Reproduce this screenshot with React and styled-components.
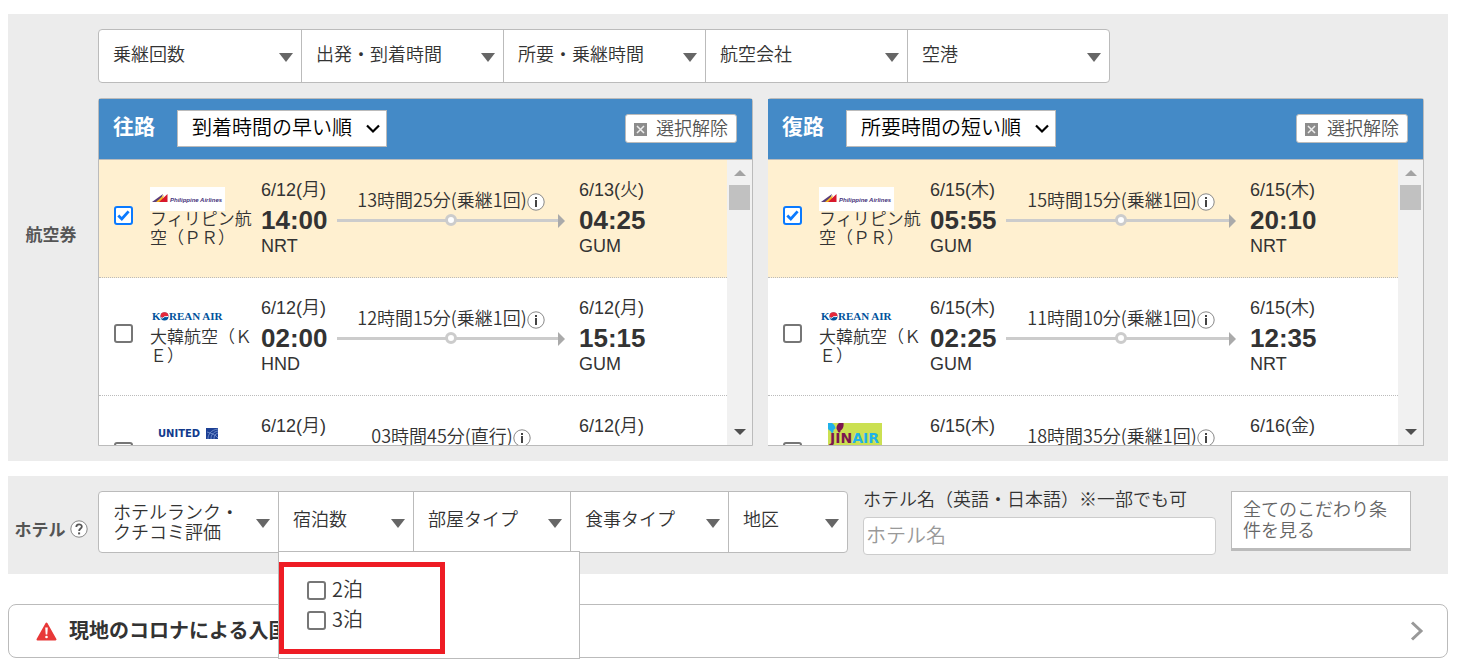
import React, { useState } from "react";
import styled, { createGlobalStyle } from "styled-components";

const LINE = "#bbbbbb";
const latinFirst = '"Liberation Sans", "Noto Sans CJK JP", sans-serif';

const GlobalStyle = createGlobalStyle`
  *, *::before, *::after { box-sizing: border-box; }
  body {
    margin: 0;
    background: #fff;
    color: #333;
    font-family: "Noto Sans CJK JP", sans-serif;
    font-size: 18px;
    font-weight: 350;
    line-height: 20px;
  }
  button, input, select { font: inherit; color: inherit; }
`;

const Page = styled.main`
  padding: 14px 10px 6px 8px;
`;

const Section = styled.section`
  display: grid;
  grid-template-columns: 90px minmax(0, 1fr);
  align-items: center;
  padding: 15px 24px 15px 0;
  margin-bottom: 15px;
  background: #ececec;
`;

const HotelSection = styled(Section)`
  padding-bottom: 21px;
`;

const SectionTitle = styled.h2`
  display: flex;
  align-items: center;
  justify-content: center;
  gap: 4px;
  margin: 0;
  padding: 0 4px 8px 0;
  font-size: 17px;
  font-weight: 700;
  color: #555;
  white-space: nowrap;
`;

const HotelTitle = styled(SectionTitle)`
  padding: 14px 4px 0 0;
`;

const FilterBar = styled.div`
  display: grid;
  grid-template-columns: ${(p) => p.$columns};
  width: 100%;
  max-width: ${(p) => p.$max}px;
  background: #fff;
  border: 1px solid ${LINE};
  border-radius: 4px;
`;

const FilterCell = styled.div`
  position: relative;
  display: flex;
  & + & { border-left: 1px solid ${LINE}; }
`;

const FilterButton = styled.button`
  display: flex;
  flex: 1;
  align-items: center;
  justify-content: space-between;
  min-height: ${(p) => (p.$tall ? 60 : 52)}px;
  padding: 0 8px 0 14px;
  border: 0;
  background: none;
  text-align: left;
  white-space: pre-line;
  cursor: pointer;
`;

const FilterText = styled.span`
  padding-bottom: ${(p) => p.$raise}px;
`;

const CaretSvg = styled.svg`
  flex: none;
  margin-top: 3px;
`;

const Menu = styled.fieldset`
  position: absolute;
  z-index: 2;
  top: 59px;
  left: -1px;
  width: 302px;
  min-width: 0;
  height: 108px;
  margin: 0;
  padding: 10px 0 0;
  border: 1px solid ${LINE};
  background: #fff;
`;

const Highlight = styled.div`
  display: flex;
  flex-direction: column;
  width: 166px;
  height: 92px;
  padding: 7px 0 0 23px;
  border: 5px solid #ee1c24;
`;

const CheckWrap = styled.span`
  position: relative;
  display: block;
  flex: none;
  width: 19px;
  height: 19px;
  svg { position: absolute; inset: 0; pointer-events: none; }
`;

const Option = styled.label`
  display: flex;
  align-items: center;
  gap: 6px;
  height: 30px;
  font-size: 20px;
  cursor: pointer;
  ${CheckWrap} { margin-top: 3px; }
`;

const CheckInput = styled.input`
  appearance: none;
  display: block;
  width: 19px;
  height: 19px;
  margin: 0;
  background: #fff;
  border: 2px solid #767676;
  border-radius: 3px;
  &:checked { border-color: #0a7aff; }
`;

const Panels = styled.div`
  display: grid;
  grid-template-columns: minmax(0, 655fr) minmax(0, 656fr);
  gap: 15px;
  margin-top: 15px;
`;

const Panel = styled.section`
  border: 1px solid ${LINE};
  border-left-width: ${(p) => (p.$plain ? 0 : 1)}px;
  border-radius: 3px 3px 0 0;
  background: #fff;
`;

const PanelHead = styled.header`
  display: flex;
  align-items: center;
  height: 61px;
  padding: 0 15px 2px 14px;
  background: #448ac7;
  border-bottom: 1px solid ${LINE};
`;

const PanelTitle = styled.h3`
  margin: 0 22px 6px 0;
  font-size: 21px;
  font-weight: 700;
  color: #fff;
`;

const SelectWrap = styled.span`
  position: relative;
  display: block;
  width: 210px;
  svg { position: absolute; right: 7px; top: 14px; pointer-events: none; }
`;

const SortSelect = styled.select`
  appearance: none;
  display: block;
  width: 100%;
  height: 37px;
  padding: 0 28px 3px 14px;
  border: 1px solid ${LINE};
  border-radius: 0;
  background: #fff;
  color: #000;
  font-size: 20px;
`;

const ClearButton = styled.button`
  display: flex;
  align-items: center;
  gap: 9px;
  height: 29px;
  margin-left: auto;
  padding: 0 8px;
  border: 1px solid ${LINE};
  border-radius: 3px;
  background: #fff;
  color: #555;
  white-space: nowrap;
  cursor: pointer;
  svg { margin-top: 2px; }
  span { padding-bottom: 3px; }
`;

const PanelBody = styled.div`
  display: flex;
  height: 285px;
`;

const Flights = styled.ul`
  flex: 1;
  min-width: 0;
  margin: 0;
  padding: 0;
  list-style: none;
  overflow-y: auto;
  scrollbar-width: none;
`;

const Flight = styled.li`
  display: grid;
  grid-template-columns: 36px 111px 76px minmax(0, 1fr) 148px;
  height: 118px;
  padding-left: 15px;
  border-bottom: 1px dotted ${LINE};
  background: ${(p) => (p.$selected ? "#fff0d0" : "#fff")};
`;

const PickCell = styled.div`
  padding-top: 46px;
`;

const Airline = styled.div`
  padding-top: 27px;
  width: 105px;
  font-size: 17px;
  line-height: 19px;
  svg { display: block; margin-bottom: -3px; }
`;

const Stop = styled.div`
  padding-top: 17px;
  font-family: ${latinFirst};
`;

const StopDate = styled.div`
  height: 28px;
  line-height: 26px;
`;

const StopTime = styled.div`
  font-size: 26px;
  font-weight: 700;
  line-height: 30px;
`;

const StopPort = styled.div`
  line-height: 22px;
`;

const Journey = styled.div`
  padding: 27px 14px 0 0;
`;

const Duration = styled.div`
  display: flex;
  align-items: center;
  justify-content: center;
  height: 26px;
  white-space: nowrap;
  span { padding-bottom: 3px; }
  svg { margin-top: 4px; }
`;

const Track = styled.div`
  position: relative;
  display: flex;
  align-items: center;
  height: 15px;
`;

const TrackLine = styled.span`
  flex: 1;
  height: 3px;
  background: #ccc;
`;

const TrackDot = styled.span`
  position: absolute;
  left: 50%;
  top: 1px;
  width: 12px;
  height: 12px;
  margin-left: -6px;
  border: 3px solid #ccc;
  border-radius: 50%;
  background: #fff;
`;

const ScrollBar = styled.div`
  display: flex;
  flex-direction: column;
  align-items: center;
  flex: none;
  width: 25px;
  padding: 10px 0;
  background: #f1f1f1;
`;

const Thumb = styled.span`
  width: 21px;
  height: 25px;
  margin: 9px 0 auto;
  background: #c1c1c1;
`;

const HotelRow = styled.div`
  display: grid;
  grid-template-columns: minmax(0, 750px) minmax(0, 353px) 180px;
  gap: 15px;
  align-items: start;
`;

const NameField = styled.div`
  display: flex;
  flex-direction: column;
  label { line-height: 14px; padding-bottom: 12px; white-space: nowrap; }
`;

const NameInput = styled.input`
  flex: none;
  width: 100%;
  height: 38px;
  margin-bottom: -4px;
  padding: 0 4px 4px 2px;
  border: 1px solid #ccc;
  border-radius: 4px;
  background: #fff;
  font-size: 20px;
  &::placeholder { color: #999; opacity: 1; }
`;

const AllButton = styled.button`
  height: 60px;
  padding: 0 22px 2px 11px;
  border: 1px solid ${LINE};
  border-bottom-width: 3px;
  background: #fff;
  color: #666;
  line-height: 21px;
  text-align: left;
  cursor: pointer;
`;

const Notice = styled.a`
  display: flex;
  align-items: center;
  height: 54px;
  margin-top: 30px;
  padding: 0 23px 0 27px;
  border: 1px solid ${LINE};
  border-radius: 8px;
  background: #fff;
  color: #333;
  font-size: 20px;
  font-weight: 700;
  text-decoration: none;
`;

const NoticeText = styled.span`
  flex: 1;
  padding: 0 0 2px 12px;
`;

const Caret = () => (
  <CaretSvg width="14" height="9" viewBox="0 0 14 9" aria-hidden="true">
    <path d="M0 0H14L7 9Z" fill="#666" />
  </CaretSvg>
);

function Check({ checked = false, ...rest }) {
  const [on, setOn] = useState(checked);
  return (
    <CheckWrap>
      <CheckInput type="checkbox" checked={on} onChange={() => setOn(!on)} {...rest} />
      {on && (
        <svg width="19" height="19" viewBox="0 0 19 19" aria-hidden="true">
          <path d="M4.3 9.6L7.8 13L14.6 5.4" fill="none" stroke="#0a7aff" strokeWidth="2.8" />
        </svg>
      )}
    </CheckWrap>
  );
}

const CircleMark = ({ children }) => (
  <svg width="18" height="18" viewBox="0 0 18 18" aria-hidden="true">
    <circle cx="9" cy="9" r="8.2" fill="#fff" stroke="#888" strokeWidth="1" />
    {children}
  </svg>
);

const InfoMark = () => (
  <CircleMark>
    <rect x="8" y="4" width="2" height="2" fill="#444" />
    <rect x="8" y="7" width="2" height="7" fill="#444" />
  </CircleMark>
);

const HelpMark = () => (
  <CircleMark>
    <path d="M6.3 7C6.3 3.4 11.8 3.5 11.8 6.7C11.8 8.6 9.1 8.6 9.1 11" fill="none" stroke="#555" strokeWidth="1.8" />
    <rect x="8.1" y="12.4" width="2" height="2" fill="#555" />
  </CircleMark>
);

const PhilippineLogo = () => (
  <svg width="75" height="24" viewBox="0 0 75 24" role="img" aria-label="Philippine Airlines">
    <rect width="75" height="24" fill="#fff" />
    <path d="M2 15L13 7L10 15Z" fill="#5a3c78" />
    <path d="M6 15L14 8L12 15Z" fill="#f4b51e" />
    <path d="M9 15L17.5 7V15Z" fill="#d8182c" />
    <text x="20" y="15" fill="#43317a" fontFamily="Liberation Sans" fontSize="6" fontWeight="700" fontStyle="italic">
      Philippine Airlines
    </text>
  </svg>
);

const KoreanLogo = () => (
  <svg width="75" height="24" viewBox="0 0 75 24" role="img" aria-label="Korean Air">
    <g fill="#00529c" fontFamily="Liberation Serif" fontSize="11" fontWeight="700">
      <text x="2" y="15">K</text>
      <text x="19" y="15">REAN AIR</text>
    </g>
    <circle cx="14.5" cy="11.5" r="4" fill="#00529c" />
    <path d="M10.5 11.5A4 4 0 0 1 18.5 11.2C17 13.6 15 10 13.5 12C12.5 13.2 11 13 10.5 11.5Z" fill="#e6283a" />
    <path d="M10.8 12.2C12 13.8 13 13.2 14 12C15 10.8 16.5 12.5 18.4 11.2" fill="none" stroke="#fff" strokeWidth="1" />
  </svg>
);

const UnitedLogo = () => (
  <svg width="75" height="24" viewBox="0 0 75 24" role="img" aria-label="United">
    <text x="8" y="14" fill="#123a8c" fontFamily="DejaVu Sans" fontSize="10" fontWeight="700">
      UNITED
    </text>
    <rect x="56" y="5" width="12" height="11" fill="#1c3f94" />
    <path d="M58 16C58 11 61 7 68 6M61 16C61 12 63 9 68 8M64 16C64 13 65 11 68 10M57 9C61 10 66 12 68 15" fill="none" stroke="#8ba5d8" strokeWidth="0.7" />
  </svg>
);

const JinLogo = () => (
  <svg width="75" height="32" viewBox="0 0 75 32" role="img" aria-label="Jin Air">
    <rect x="9" width="54" height="32" fill="#cbe052" />
    <path d="M9 0H13C15 1 16 3 16.500 5C16.500 6 15 6 14.500 7C15 9.500 13 11 12 9C12 7.500 9.500 7.500 9 5.500Z" fill="#1fb1ea" />
    <path d="M24.500 0H20C18.500 1 17.500 3 17.500 5C17.500 6 18 6.500 18.500 7.500C19 10.500 22 10 21.500 7.500C24 6.500 25 3 24.500 0Z" fill="#7d1650" />
    <text x="11" y="20" fontFamily="DejaVu Sans" fontSize="14" fontWeight="700" fill="#7d1650">
      JIN<tspan fill="#1fb1ea">AIR</tspan>
    </text>
  </svg>
);

const LOGOS = { PR: PhilippineLogo, KE: KoreanLogo, UA: UnitedLogo, LJ: JinLogo };

const outbound = [
  { code: "PR", name: "フィリピン航空（ＰＲ）", length: "13時間25分(乗継1回)", stops: 1, checked: true, from: ["6/12(月)", "14:00", "NRT"], to: ["6/13(火)", "04:25", "GUM"] },
  { code: "KE", name: "大韓航空（ＫＥ）", length: "12時間15分(乗継1回)", stops: 1, from: ["6/12(月)", "02:00", "HND"], to: ["6/12(月)", "15:15", "GUM"] },
  { code: "UA", name: "", length: "03時間45分(直行)", stops: 0, from: ["6/12(月)", "", ""], to: ["6/12(月)", "", ""] },
];

const inbound = [
  { code: "PR", name: "フィリピン航空（ＰＲ）", length: "15時間15分(乗継1回)", stops: 1, checked: true, from: ["6/15(木)", "05:55", "GUM"], to: ["6/15(木)", "20:10", "NRT"] },
  { code: "KE", name: "大韓航空（ＫＥ）", length: "11時間10分(乗継1回)", stops: 1, from: ["6/15(木)", "02:25", "GUM"], to: ["6/15(木)", "12:35", "NRT"] },
  { code: "LJ", name: "", length: "18時間35分(乗継1回)", stops: 1, from: ["6/15(木)", "", ""], to: ["6/16(金)", "", ""] },
];

const FlightStop = ({ data: [date, time, port] }) => (
  <Stop>
    <StopDate>{date}</StopDate>
    <StopTime>{time}</StopTime>
    <StopPort>{port}</StopPort>
  </Stop>
);

function FlightRow({ flight }) {
  const Logo = LOGOS[flight.code];
  return (
    <Flight $selected={flight.checked}>
      <PickCell>
        <Check checked={flight.checked} aria-label={flight.name || flight.code} />
      </PickCell>
      <Airline>
        <Logo />
        {flight.name}
      </Airline>
      <FlightStop data={flight.from} />
      <Journey>
        <Duration>
          <span>{flight.length}</span>
          <InfoMark />
        </Duration>
        <Track>
          <TrackLine />
          {flight.stops > 0 && <TrackDot />}
          <svg width="7" height="14" viewBox="0 0 7 14" aria-hidden="true">
            <path d="M0 0L7 7L0 14Z" fill="#aaa" />
          </svg>
        </Track>
      </Journey>
      <FlightStop data={flight.to} />
    </Flight>
  );
}

function FlightPanel({ title, sort, flights, plain }) {
  return (
    <Panel $plain={plain}>
      <PanelHead>
        <PanelTitle>{title}</PanelTitle>
        <SelectWrap>
          <SortSelect aria-label={title} defaultValue={sort}>
            <option>{sort}</option>
          </SortSelect>
          <svg width="14" height="10" viewBox="0 0 14 10" aria-hidden="true">
            <path d="M1 1.500L7 7.500L13 1.500" fill="none" stroke="#000" strokeWidth="2.200" />
          </svg>
        </SelectWrap>
        <ClearButton type="button">
          <svg width="13" height="13" viewBox="0 0 13 13" aria-hidden="true">
            <rect width="13" height="13" fill="#8c8c8c" />
            <path d="M3 3L10 10M10 3L3 10" stroke="#eee" strokeWidth="1.500" />
          </svg>
          <span>選択解除</span>
        </ClearButton>
      </PanelHead>
      <PanelBody>
        <Flights>
          {flights.map((f) => (
            <FlightRow key={f.code} flight={f} />
          ))}
        </Flights>
        <ScrollBar aria-hidden="true">
          <svg width="12" height="6" viewBox="0 0 12 6">
            <path d="M0 6L6 0L12 6Z" fill="#a3a3a3" />
          </svg>
          <Thumb />
          <svg width="12" height="6" viewBox="0 0 12 6">
            <path d="M0 0L6 6L12 0Z" fill="#505050" />
          </svg>
        </ScrollBar>
      </PanelBody>
    </Panel>
  );
}

const flightFilters = ["乗継回数", "出発・到着時間", "所要・乗継時間", "航空会社", "空港"];
const hotelFilters = ["ホテルランク・\nクチコミ評価", "宿泊数", "部屋タイプ", "食事タイプ", "地区"];

export default function App() {
  return (
    <Page>
      <GlobalStyle />
      <Section>
        <SectionTitle>航空券</SectionTitle>
        <div>
          <FilterBar $columns="repeat(5, minmax(0, 1fr))" $max={1012}>
            {flightFilters.map((label) => (
              <FilterCell key={label}>
                <FilterButton type="button">
                  <FilterText $raise={6}>{label}</FilterText>
                  <Caret />
                </FilterButton>
              </FilterCell>
            ))}
          </FilterBar>
          <Panels>
            <FlightPanel title="往路" sort="到着時間の早い順" flights={outbound} />
            <FlightPanel title="復路" sort="所要時間の短い順" flights={inbound} plain />
          </Panels>
        </div>
      </Section>

      <HotelSection>
        <HotelTitle>
          ホテル
          <HelpMark />
        </HotelTitle>
        <HotelRow>
          <FilterBar $columns="179fr 135fr 157fr 158fr 119fr" $max={750}>
            {hotelFilters.map((label) => (
              <FilterCell key={label}>
                <FilterButton type="button" $tall aria-expanded={label === "宿泊数"}>
                  <FilterText $raise={label.includes("\n") ? 3 : 8}>{label}</FilterText>
                  <Caret />
                </FilterButton>
                {label === "宿泊数" && (
                  <Menu aria-label="宿泊数">
                    <Highlight>
                      <Option>
                        <Check />
                        2泊
                      </Option>
                      <Option>
                        <Check />
                        3泊
                      </Option>
                    </Highlight>
                  </Menu>
                )}
              </FilterCell>
            ))}
          </FilterBar>
          <NameField>
            <label htmlFor="hotel-name">ホテル名（英語・日本語）※一部でも可</label>
            <NameInput id="hotel-name" type="text" placeholder="ホテル名" />
          </NameField>
          <AllButton type="button">全てのこだわり条件を見る</AllButton>
        </HotelRow>
      </HotelSection>

      <Notice href="#notice">
        <svg width="21" height="19" viewBox="0 0 21 19" aria-hidden="true">
          <path d="M10.500 1.500L19.500 17.500H1.500Z" fill="#e83838" stroke="#e83838" strokeWidth="2" strokeLinejoin="round" />
          <path d="M9.200 5.500H11.800L11.300 12.500H9.700Z" fill="#fff" />
          <circle cx="10.500" cy="15" r="1.300" fill="#fff" />
        </svg>
        <NoticeText>現地のコロナによる入国</NoticeText>
        <svg width="14" height="20" viewBox="0 0 14 20" aria-hidden="true">
          <path d="M2 1.500L11 10L2 18.500" fill="none" stroke="#999" strokeWidth="3" />
        </svg>
      </Notice>
    </Page>
  );
}
